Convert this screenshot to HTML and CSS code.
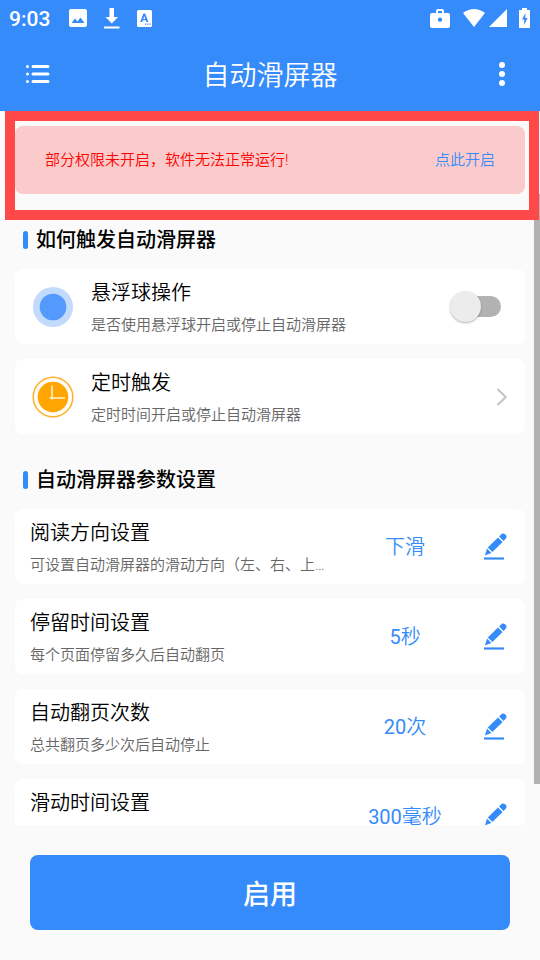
FILE: index.html
```html
<!DOCTYPE html>
<html lang="zh-CN">
<head>
<meta charset="utf-8">
<meta name="viewport" content="width=device-width, initial-scale=1">
<title>自动滑屏器</title>
<link rel="stylesheet" href="styles.css">
</head>
<body>
<svg class="defs" width="0" height="0" aria-hidden="true">
  <symbol id="edit" viewBox="0 0 24 28">
    <path d="M1 25.500h20" fill="none" stroke="currentColor" stroke-width="2.200"/>
    <path d="M17.600 2q2.300-2.600 4.800-.4t-.4 4.800l-1.500 1.500-4.400-4.400z"/>
    <path d="M15 4.400l4.600 4.600L9.400 19 4.800 14.400z"/>
    <path d="M4 15.600l4.400 4.300L2 22.400z"/>
  </symbol>
</svg>
<header class="top">
  <div class="status">
    <span class="time">9:03</span>
    <svg class="s-image" width="18" height="18" viewBox="0 0 18 18"><path fill="currentColor" fill-rule="evenodd" d="M2 0h14q2 0 2 2v14q0 2-2 2H2q-2 0-2-2V2q0-2 2-2zM2.500 14h13l-4-5.500-3 4-2.500-3z"/></svg>
    <svg class="s-down" width="16" height="21" viewBox="0 0 16 21"><path fill="currentColor" d="M5.500 0h4.500v9h4l-6.200 6.500L1.500 9h4zM0 18.500h15.500v2H0z"/></svg>
    <svg class="s-lang" width="15" height="17" viewBox="0 0 15 17"><path fill="currentColor" fill-rule="evenodd" d="M1.500 0h12q1.500 0 1.500 1.500v14q0 1.500-1.500 1.500h-12Q0 17 0 15.500v-14Q0 0 1.500 0zM6.400 3.500L3.200 12h2l.6-1.700h3l.6 1.700h2L8.200 3.500zm.9 2.500l1 3H6.300zM8 13.500v1.200h1.200v-1.200zM10.200 13.500v1.200h1.200v-1.200zM12.400 13.500v1.200h1.200v-1.200z"/></svg>
    <span class="spacer"></span>
    <svg class="s-case" width="20" height="19" viewBox="0 0 20 19"><path fill="currentColor" fill-rule="evenodd" d="M6 4V2q0-2 2-2h4q2 0 2 2v2h4q2 0 2 2v11q0 2-2 2H2q-2 0-2-2V6q0-2 2-2zM8 2v2h4V2zM10 8.500a2.200 2.200 0 1 0 .01 0z"/></svg>
    <svg class="s-wifi" width="22" height="18" viewBox="0 0 22 18"><path fill="currentColor" d="M0 4Q11-4 22 4L11 18z"/></svg>
    <svg class="s-cell" width="18" height="18" viewBox="0 0 18 18"><path fill="currentColor" d="M18 0v18H0z"/></svg>
    <svg class="s-batt" width="11" height="20" viewBox="0 0 11 20"><path fill="currentColor" fill-rule="evenodd" d="M3 2V0h5v2h3v18H0V2zM6.500 5L3 11.500h2.200V17L8.500 10H6.300z"/></svg>
  </div>
  <div class="bar">
    <button class="icon-btn menu" type="button" aria-label="菜单"><svg width="24" height="20" viewBox="0 0 24 20"><path d="M7 2.500h15M7 10h15M7 17.500h15" fill="none" stroke="currentColor" stroke-width="3" stroke-linecap="round"/><g fill="currentColor"><circle cx="1.500" cy="2.500" r="1.500"/><circle cx="1.500" cy="10" r="1.500"/><circle cx="1.500" cy="17.500" r="1.500"/></g></svg></button>
    <h1>自动滑屏器</h1>
    <button class="icon-btn more" type="button" aria-label="更多"><svg width="6" height="24" viewBox="0 0 6 24" fill="currentColor"><circle cx="3" cy="3" r="3"/><circle cx="3" cy="12" r="3"/><circle cx="3" cy="21" r="3"/></svg></button>
  </div>
</header>
<div class="view">
  <main class="scroll">
    <div class="alert">
      <span>部分权限未开启，软件无法正常运行!</span>
      <a href="#permissions">点此开启</a>
    </div>
    <h2>如何触发自动滑屏器</h2>
    <div class="list">
      <div class="card">
        <svg class="lead" width="42" height="42" viewBox="0 0 42 42"><circle cx="21" cy="21" r="20" fill="#c2dafc"/><circle cx="21" cy="21" r="13.300" fill="#5499fc"/></svg>
        <div class="text"><label class="title" for="ball">悬浮球操作</label><p>是否使用悬浮球开启或停止自动滑屏器</p></div>
        <input class="switch" id="ball" type="checkbox" role="switch">
      </div>
      <a class="card" href="#timer">
        <svg class="lead" width="42" height="42" viewBox="0 0 42 42"><circle cx="21" cy="21" r="19.800" fill="#fffdf5" stroke="#fdb02c" stroke-width="1.500"/><circle cx="21" cy="21" r="15.300" fill="#ffa602"/><path d="M20 9.500v14M17.500 22H33" fill="none" stroke="#fff3cf" stroke-width="1.600"/></svg>
        <div class="text"><span class="title">定时触发</span><p>定时时间开启或停止自动滑屏器</p></div>
        <svg class="chevron" width="12" height="18" viewBox="0 0 12 18"><path d="M2 1.500L9.800 9 2 16.500" fill="none" stroke="#c4c4c4" stroke-width="2" stroke-linecap="round" stroke-linejoin="round"/></svg>
      </a>
    </div>
    <h2>自动滑屏器参数设置</h2>
    <div class="list">
      <div class="card">
        <div class="text"><span class="title">阅读方向设置</span><p>可设置自动滑屏器的滑动方向（左、右、上…</p></div>
        <span class="value">下滑</span>
        <button class="edit" type="button" aria-label="编辑阅读方向"><svg width="24" height="28"><use href="#edit"/></svg></button>
      </div>
      <div class="card">
        <div class="text"><span class="title">停留时间设置</span><p>每个页面停留多久后自动翻页</p></div>
        <span class="value"><span class="num">5</span>秒</span>
        <button class="edit" type="button" aria-label="编辑停留时间"><svg width="24" height="28"><use href="#edit"/></svg></button>
      </div>
      <div class="card">
        <div class="text"><span class="title">自动翻页次数</span><p>总共翻页多少次后自动停止</p></div>
        <span class="value"><span class="num">20</span>次</span>
        <button class="edit" type="button" aria-label="编辑翻页次数"><svg width="24" height="28"><use href="#edit"/></svg></button>
      </div>
      <div class="card">
        <div class="text"><span class="title">滑动时间设置</span><p></p></div>
        <span class="value"><span class="num">300</span>毫秒</span>
        <button class="edit" type="button" aria-label="编辑滑动时间"><svg width="24" height="28"><use href="#edit"/></svg></button>
      </div>
    </div>
  </main>
  <div class="thumb"></div>
  <div class="highlight"></div>
</div>
<footer><button class="start" type="button">启用</button></footer>
</body>
</html>
```
FILE: styles.css
```css
* { box-sizing: border-box; }
body {
  margin: 0;
  height: 100vh;
  display: flex;
  flex-direction: column;
  background: #fafafa;
  color: #000;
  font-family: Roboto, "Noto Sans CJK SC", sans-serif;
  font-weight: 350;
}
h1, h2, p { margin: 0; }
a { color: inherit; text-decoration: none; }
button { border: 0; padding: 0; background: none; color: inherit; font: inherit; }
svg { display: block; flex: none; }
.defs { position: absolute; }

.top { flex: none; background: #368bfa; color: #fff; }
.status { display: flex; align-items: center; height: 36px; padding: 0 10px 0 9px; }
.time { width: 60px; padding-top: 1px; font-size: 21px; font-weight: 500; }
.s-down { margin-left: 17px; }
.s-lang { margin-left: 17px; }
.spacer { flex: 1; }
.s-wifi { margin-left: 13px; }
.s-cell { margin-left: 4px; }
.s-batt { margin-left: 12px; }
.bar { display: flex; align-items: center; height: 75px; padding: 0 26px; }
.icon-btn { width: 30px; display: flex; }
.more { justify-content: flex-end; padding-right: 9px; }
h1 { flex: 1; padding-top: 4px; text-align: center; font-size: 27px; line-height: 36px; font-weight: 350; }

.view { position: relative; flex: 1; min-height: 0; }
.scroll { height: 100%; overflow-y: auto; scrollbar-width: none; padding: 15px; }
.alert {
  display: flex;
  align-items: center;
  justify-content: space-between;
  height: 68px;
  padding: 0 30px 3px;
  border-radius: 8px;
  background: #fbcbcb;
  color: #f00;
  font-size: 15px;
}
.alert a { color: #368bfa; }
h2 {
  display: flex;
  align-items: center;
  gap: 8px;
  padding: 31px 8px 14px;
  font-size: 20px;
  line-height: 30px;
  font-weight: 500;
}
h2::before { content: ""; width: 5px; height: 18px; border-radius: 3px; background: #368bfa; }
.list { display: grid; grid-template-columns: minmax(0, 1fr); gap: 15px; }
.card {
  display: flex;
  align-items: center;
  height: 75px;
  padding: 0 15px;
  border-radius: 8px;
  background: #fff;
}
.lead { margin: 0 17px 0 2px; }
.text { flex: 1; min-width: 0; padding-top: 2px; }
.title { display: block; font-size: 20px; line-height: 30px; }
.text p {
  min-height: 24px;
  margin-top: 5px;
  font-size: 15px;
  line-height: 24px;
  color: #666;
  white-space: nowrap;
  overflow: hidden;
  text-overflow: ellipsis;
}
.value { width: 150px; padding-bottom: 2px; text-align: center; font-size: 20px; color: #368bfa; }
.num { font-weight: 400; }
.edit { width: 30px; display: flex; justify-content: center; color: #368bfa; }
.edit svg { fill: currentColor; }
.chevron { margin-right: 2px; }
.switch {
  appearance: none;
  position: relative;
  width: 48px;
  height: 21px;
  margin: 0 9px 0 0;
  border-radius: 11px;
  background: #b2b2b2;
}
.switch::before {
  content: "";
  position: absolute;
  left: -3px;
  top: -5px;
  width: 31px;
  height: 31px;
  border-radius: 50%;
  background: #ececec;
  box-shadow: 0 1px 2px rgba(0, 0, 0, .3);
}
.switch:checked { background: #9ac5fd; }
.switch:checked::before { left: 21px; background: #368bfa; }
.thumb { position: absolute; right: 0; top: 83px; bottom: 41px; width: 6px; background: #b2b2b2; }
.highlight { position: absolute; left: 5px; right: 1px; top: 0; height: 109px; border: 10px solid #ff4848; pointer-events: none; }

footer { flex: none; padding: 30px; }
.start {
  display: block;
  width: 100%;
  height: 75px;
  border-radius: 8px;
  background: #368bfa;
  color: #fff;
  font-size: 27px;
  font-weight: 500;
}
```
